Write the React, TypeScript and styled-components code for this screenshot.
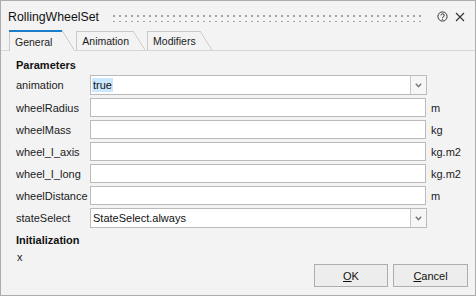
import React from "react";
import styled, { createGlobalStyle } from "styled-components";

const Global = createGlobalStyle`
  html, body { margin: 0; padding: 0; background: #f3f3f3; }
  body { font-family: "Liberation Sans", Arial, sans-serif; }
`;

const Window = styled.div`
  box-sizing: border-box;
  width: 476px;
  height: 296px;
  border: 1px solid #acacac;
  background: #f3f3f3;
  display: flex;
  flex-direction: column;
  font-family: "Liberation Sans", Arial, sans-serif;
  color: #1b1b1b;
  overflow: hidden;
`;

const TitleBar = styled.div`
  box-sizing: border-box;
  height: 30px;
  display: flex;
  align-items: center;
  padding: 2px 9px 0 7px;
`;

const Title = styled.span`
  font-size: 12.3px;
  color: #111;
`;

const Grip = styled.div`
  flex: 1;
  height: 10px;
  margin: 0 11px 0 14px;
  background-image: conic-gradient(from 270deg at 2px 2px, #a3a3a3 25%, transparent 0);
  background-size: 6px 6px;
  background-position: 0 3px;
`;

const IconButton = styled.span<{ $gap?: number }>`
  display: inline-flex;
  align-items: center;
  justify-content: center;
  width: 12px;
  height: 12px;
  margin-left: ${(p) => p.$gap ?? 0}px;
  color: #333;
`;

const TabStrip = styled.div`
  box-sizing: border-box;
  height: 21px;
  display: flex;
  align-items: flex-end;
  padding-left: 8px;
  border-bottom: 1px solid #d6d6d6;
`;

const Tab = styled.div<{ $active?: boolean }>`
  position: relative;
  box-sizing: border-box;
  height: ${(p) => (p.$active ? 21 : 19)}px;
  margin-bottom: ${(p) => (p.$active ? -1 : 0)}px;
  margin-right: 2px;
  padding: ${(p) => (p.$active ? "2px 22px 0 5px" : "1px 16px 0 5px")};
  border-left: 1px solid #c9c9c9;
  background: #f3f3f3;
  font-size: 10.5px;
  color: #1b1b1b;
  display: flex;
  align-items: center;
  &::before {
    content: "";
    position: absolute;
    left: -1px;
    right: 12px;
    top: 0;
    height: ${(p) => (p.$active ? 2 : 1)}px;
    background: ${(p) => (p.$active ? "#1a7fc8" : "#c9c9c9")};
  }
  &::after {
    content: "";
    position: absolute;
    top: 0;
    right: 0;
    bottom: ${(p) => (p.$active ? 1 : 0)}px;
    width: 12px;
    background: linear-gradient(
      to top right,
      transparent calc(50% - 0.7px),
      #c4c4c4 50%,
      transparent calc(50% + 0.7px)
    );
  }
`;

const Pane = styled.div`
  flex: 1;
  display: flex;
  flex-direction: column;
  padding: 7px 0 0 15px;
`;

const SectionHeader = styled.div<{ $top?: number }>`
  font-size: 11px;
  font-weight: bold;
  line-height: 14px;
  color: #111;
  margin-top: ${(p) => p.$top ?? 0}px;
`;

const FormGrid = styled.div`
  display: grid;
  grid-template-columns: 74px 337px auto;
  row-gap: 3px;
  margin-top: 3px;
  align-items: center;
`;

const Label = styled.div`
  font-size: 11px;
  line-height: 14px;
  white-space: nowrap;
`;

const Unit = styled.div`
  font-size: 11px;
  padding-left: 4px;
  white-space: nowrap;
`;

const TextField = styled.div`
  box-sizing: border-box;
  height: 19px;
  width: 336px;
  border: 1px solid #bababa;
  background: #fff;
`;

const Combo = styled.div`
  box-sizing: border-box;
  height: 20px;
  width: 337px;
  border: 1px solid #bababa;
  background: #fff;
  display: flex;
`;

const ComboValue = styled.div`
  flex: 1;
  display: flex;
  align-items: center;
  padding-left: 2px;
  font-size: 11px;
  color: #111;
`;

const Selected = styled.span`
  display: inline-block;
  background: #cce8ff;
  line-height: 14px;
  padding: 0 1px;
  margin-left: -1px;
`;

const DropButton = styled.div`
  width: 15px;
  border-left: 1px solid #c6c6c6;
  background: #f6f6f6;
  display: flex;
  align-items: center;
  justify-content: center;
`;

const Plain = styled.div`
  font-size: 11px;
  line-height: 14px;
  margin-top: 3px;
  padding-left: 1px;
`;

const Footer = styled.div`
  margin-top: auto;
  display: flex;
  justify-content: flex-end;
  gap: 5px;
  padding: 0 7px 8px 0;
`;

const Button = styled.button<{ $w: number }>`
  box-sizing: border-box;
  width: ${(p) => p.$w}px;
  height: 23px;
  border: 1px solid #adadad;
  background: #ededed;
  font-family: "Liberation Sans", Arial, sans-serif;
  font-size: 11px;
  color: #111;
  padding: 0;
`;

const Chevron = () => (
  <svg width="7" height="5" viewBox="0 0 7 5">
    <path d="M0.8 0.8 L3.5 3.6 L6.2 0.8" fill="none" stroke="#7d7d7d" strokeWidth="1.5" />
  </svg>
);

const HelpIcon = () => (
  <svg width="11" height="11" viewBox="0 0 11 11">
    <circle cx="5.5" cy="5.5" r="4.6" fill="none" stroke="#333" strokeWidth="1" />
    <path d="M4 4.4 A1.6 1.6 0 1 1 6.1 5.9 C5.6 6.2 5.5 6.5 5.5 7" fill="none" stroke="#333" strokeWidth="1" />
    <circle cx="5.5" cy="8.2" r="0.6" fill="#333" />
  </svg>
);

const CloseIcon = () => (
  <svg width="10" height="10" viewBox="0 0 10 10">
    <path d="M1 1 L9 9 M9 1 L1 9" stroke="#333" strokeWidth="1.1" />
  </svg>
);

type Row = { label: string; kind: "combo" | "text"; value?: string; selected?: boolean; unit?: string };

const rows: Row[] = [
  { label: "animation", kind: "combo", value: "true", selected: true },
  { label: "wheelRadius", kind: "text", unit: "m" },
  { label: "wheelMass", kind: "text", unit: "kg" },
  { label: "wheel_I_axis", kind: "text", unit: "kg.m2" },
  { label: "wheel_I_long", kind: "text", unit: "kg.m2" },
  { label: "wheelDistance", kind: "text", unit: "m" },
  { label: "stateSelect", kind: "combo", value: "StateSelect.always" },
];

export default function App() {
  return (
    <>
      <Global />
      <Window>
        <TitleBar>
          <Title>RollingWheelSet</Title>
          <Grip />
          <IconButton>
            <HelpIcon />
          </IconButton>
          <IconButton $gap={6}>
            <CloseIcon />
          </IconButton>
        </TitleBar>
        <TabStrip>
          <Tab $active>General</Tab>
          <Tab>Animation</Tab>
          <Tab>Modifiers</Tab>
        </TabStrip>
        <Pane>
          <SectionHeader>Parameters</SectionHeader>
          <FormGrid>
            {rows.map((r) => (
              <React.Fragment key={r.label}>
                <Label>{r.label}</Label>
                {r.kind === "combo" ? (
                  <Combo>
                    <ComboValue>
                      {r.selected ? <Selected>{r.value}</Selected> : <span>{r.value}</span>}
                    </ComboValue>
                    <DropButton>
                      <Chevron />
                    </DropButton>
                  </Combo>
                ) : (
                  <TextField />
                )}
                <Unit>{r.unit ?? ""}</Unit>
              </React.Fragment>
            ))}
          </FormGrid>
          <SectionHeader $top={5}>Initialization</SectionHeader>
          <Plain>x</Plain>
          <Footer>
            <Button $w={74}>
              <u>O</u>K
            </Button>
            <Button $w={75}>
              <u>C</u>ancel
            </Button>
          </Footer>
        </Pane>
      </Window>
    </>
  );
}
